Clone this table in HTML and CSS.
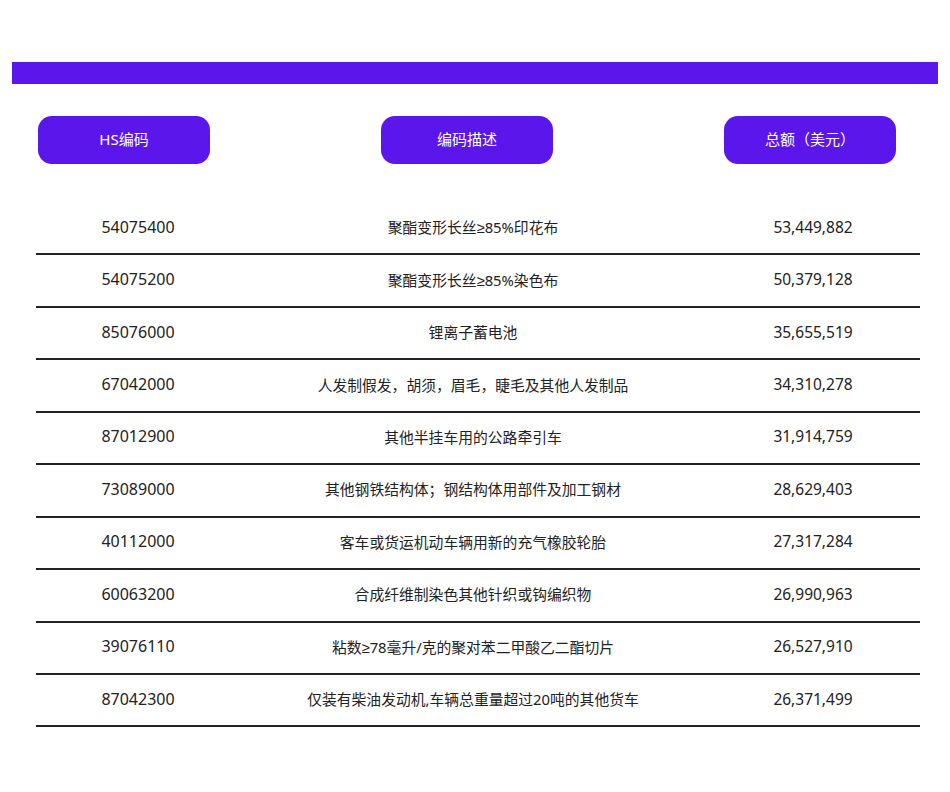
FILE: index.html
```html
<!DOCTYPE html>
<html lang="zh">
<head>
<meta charset="utf-8">
<link rel="stylesheet" href="styles.css">
</head>
<body>
<div class="bar"></div>
<div class="heads">
  <div class="pill">HS编码</div>
  <div class="pill">编码描述</div>
  <div class="pill">总额（美元）</div>
</div>
<div class="table">
  <div class="row"><div class="c1">54075400</div><div class="c2">聚酯变形长丝≥85%印花布</div><div class="c3">53,449,882</div></div>
  <div class="row"><div class="c1">54075200</div><div class="c2">聚酯变形长丝≥85%染色布</div><div class="c3">50,379,128</div></div>
  <div class="row"><div class="c1">85076000</div><div class="c2">锂离子蓄电池</div><div class="c3">35,655,519</div></div>
  <div class="row"><div class="c1">67042000</div><div class="c2">人发制假发，胡须，眉毛，睫毛及其他人发制品</div><div class="c3">34,310,278</div></div>
  <div class="row"><div class="c1">87012900</div><div class="c2">其他半挂车用的公路牵引车</div><div class="c3">31,914,759</div></div>
  <div class="row"><div class="c1">73089000</div><div class="c2">其他钢铁结构体；钢结构体用部件及加工钢材</div><div class="c3">28,629,403</div></div>
  <div class="row"><div class="c1">40112000</div><div class="c2">客车或货运机动车辆用新的充气橡胶轮胎</div><div class="c3">27,317,284</div></div>
  <div class="row"><div class="c1">60063200</div><div class="c2">合成纤维制染色其他针织或钩编织物</div><div class="c3">26,990,963</div></div>
  <div class="row"><div class="c1">39076110</div><div class="c2">粘数≥78毫升/克的聚对苯二甲酸乙二酯切片</div><div class="c3">26,527,910</div></div>
  <div class="row"><div class="c1">87042300</div><div class="c2">仅装有柴油发动机,车辆总重量超过20吨的其他货车</div><div class="c3">26,371,499</div></div>
</div>
</body>
</html>
```
FILE: styles.css
```css
html, body {
  margin: 0;
  padding: 0;
  background: #fff;
  font-family: "Noto Sans", "Liberation Sans", "Noto Sans CJK SC", sans-serif;
  color: #222;
}
.bar {
  margin: 62px 12px 0 12px;
  height: 22px;
  background: #5b17eb;
}
.heads {
  display: flex;
  justify-content: space-between;
  margin: 32px 0 0 38px;
  width: 858px;
}
.pill {
  width: 172px;
  height: 48px;
  border-radius: 14px;
  background: #5b17eb;
  color: #fff;
  font-size: 15px;
  display: flex;
  align-items: center;
  justify-content: center;
  padding-bottom: 3px;
  box-sizing: border-box;
}
.table {
  margin: 39px 0 0 36px;
  width: 884px;
}
.row {
  display: grid;
  grid-template-columns: 204px 466px 214px;
  height: 52.45px;
  box-sizing: border-box;
  border-bottom: 2px solid #222;
  padding-bottom: 3px;
  align-items: center;
  font-size: 16px;
}
.row > div {
  text-align: center;
}
.row > .c2 {
  font-size: 14.8px;
}
.row > .c3 {
  font-size: 15.5px;
}
```
